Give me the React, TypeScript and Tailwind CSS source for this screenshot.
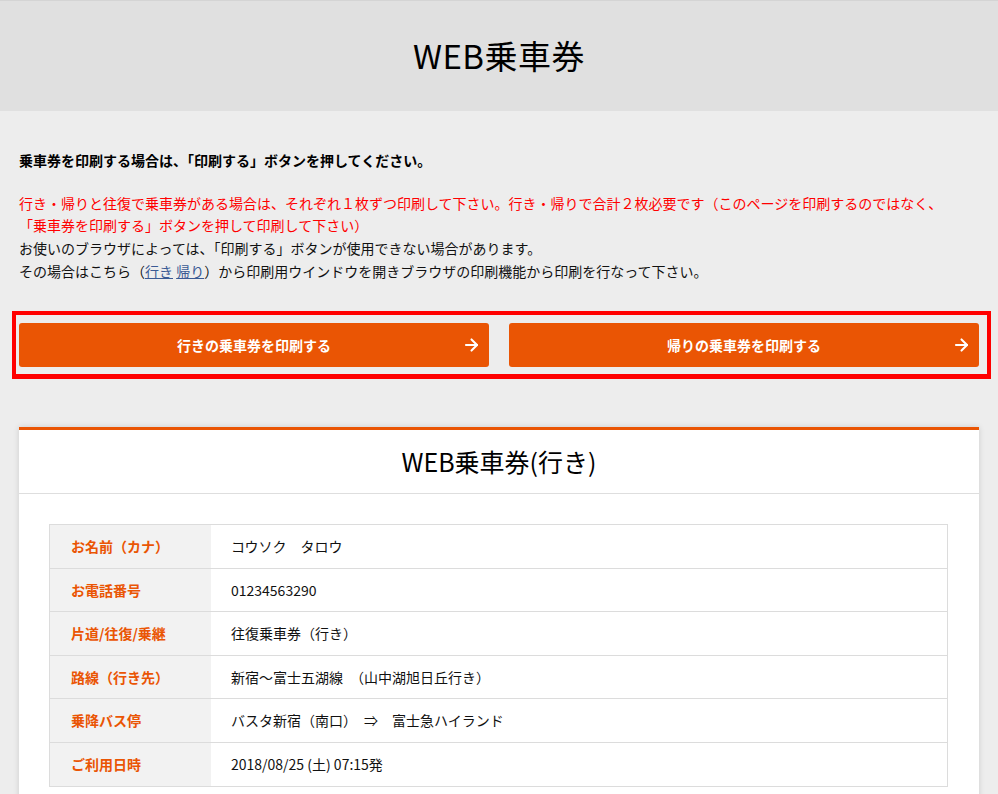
import { ArrowRight } from "lucide-react";

const rows = [
  { label: "お名前（カナ）", value: "コウソク　タロウ" },
  { label: "お電話番号", value: "01234563290" },
  { label: "片道/往復/乗継", value: "往復乗車券（行き）" },
  { label: "路線（行き先）", value: "新宿～富士五湖線　（山中湖旭日丘行き）" },
  { label: "乗降バス停", value: "バスタ新宿（南口）　⇒　富士急ハイランド" },
  { label: "ご利用日時", value: "2018/08/25 (土) 07:15発" },
];

function PrintButton({ label }: { label: string }) {
  return (
    <button className="relative flex h-[44px] flex-1 items-center justify-center rounded-[3px] bg-[#ea5504] text-[14px] font-bold text-white">
      {label}
      <ArrowRight className="absolute right-[8px] top-1/2 -translate-y-1/2" size={19} strokeWidth={2.6} />
    </button>
  );
}

export default function App() {
  return (
    <div
      className="h-[794px] overflow-hidden bg-[#ededed] text-[#111]"
      style={{ fontFamily: '"Noto Sans CJK JP", "Noto Sans", sans-serif' }}
    >
      {/* Header */}
      <header className="flex h-[111px] items-center justify-center border-t border-[#d4d4d4] bg-[#e0e0e0]">
        <h1 className="text-[33px] font-normal tracking-[0.5px] text-black">WEB乗車券</h1>
      </header>

      <main className="mx-auto w-[960px] pt-[38px]">
        <p className="text-[14px] font-bold leading-[22.5px] text-black">
          乗車券を印刷する場合は、「印刷する」ボタンを押してください。
        </p>

        <div className="mt-[20px] text-[14px] leading-[22.7px]">
          <p className="text-[#ff0000]">
            行き・帰りと往復で乗車券がある場合は、それぞれ１枚ずつ印刷して下さい。行き・帰りで合計２枚必要です（このページを印刷するのではなく、
            <br />
            「乗車券を印刷する」ボタンを押して印刷して下さい）
          </p>
          <p>お使いのブラウザによっては、「印刷する」ボタンが使用できない場合があります。</p>
          <p>
            その場合はこちら（
            <a className="text-[#3a5a94] underline">行き</a>{" "}
            <a className="text-[#3a5a94] underline">帰り</a>
            ）から印刷用ウインドウを開きブラウザの印刷機能から印刷を行なって下さい。
          </p>
        </div>

        {/* Buttons */}
        <div className="-ml-[7px] mt-[29px] w-[979px] border-4 border-b-[5px] border-[#ff0000] pb-[7px] pl-[3px] pr-[8px] pt-[8px]">
          <div className="flex gap-[20px]">
            <PrintButton label="行きの乗車券を印刷する" />
            <PrintButton label="帰りの乗車券を印刷する" />
          </div>
        </div>

        {/* Ticket card */}
        <section className="mt-[48px] border-t-[3px] border-[#ea5504] bg-white shadow-[0_0_6px_rgba(0,0,0,0.14)]">
          <div className="flex h-[64px] items-center justify-center border-b border-[#dedede]">
            <h2 className="text-[25px] font-normal text-black">WEB乗車券(行き)</h2>
          </div>
          <div className="pb-[30px] pl-[30px] pr-[31px] pt-[30px]">
            <div className="border border-[#dcdcdc]">
              {rows.map((row, i) => (
                <div
                  key={row.label}
                  className={`flex h-[43.5px] ${i < rows.length - 1 ? "border-b border-[#dcdcdc]" : ""}`}
                >
                  <div className="flex w-[161px] items-center bg-[#f2f2f2] pl-[21px] text-[14px] font-bold text-[#ea5504]">
                    {row.label}
                  </div>
                  <div className="flex flex-1 items-center pl-[20px] text-[14px] text-[#111]">{row.value}</div>
                </div>
              ))}
            </div>
          </div>
        </section>
      </main>
    </div>
  );
}
